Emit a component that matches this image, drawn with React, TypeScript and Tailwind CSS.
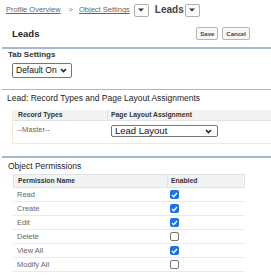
import React from "react";

function DropBtn() {
  return (
    <span className="inline-flex h-[13px] w-[15px] items-center justify-center rounded-[2px] border border-[#b0b0b0] bg-[#fbfbfb]">
      <svg width="6" height="4" viewBox="0 0 6 4">
        <path d="M0 0.5h6L3 3.5z" fill="#333" />
      </svg>
    </span>
  );
}

function Chevron() {
  return (
    <svg width="7" height="5" viewBox="0 0 7 5" className="shrink-0">
      <path d="M1 1l2.5 2.5L6 1" fill="none" stroke="#222" strokeWidth="1.6" />
    </svg>
  );
}

function Check({ on }: { on: boolean }) {
  return on ? (
    <span className="flex h-[9px] w-[9px] items-center justify-center rounded-[2px] bg-[#1a73e8]">
      <svg width="7" height="6" viewBox="0 0 7 6">
        <path d="M1 3l1.7 1.7L6 1" fill="none" stroke="#fff" strokeWidth="1.4" />
      </svg>
    </span>
  ) : (
    <span className="h-[9px] w-[9px] rounded-[2px] border border-[#767676] bg-white" />
  );
}

const perms: [string, boolean][] = [
  ["Read", true],
  ["Create", true],
  ["Edit", true],
  ["Delete", false],
  ["View All", true],
  ["Modify All", false],
];

export default function App() {
  return (
    <div
      className="h-[276px] w-[271px] overflow-hidden bg-white text-[#333]"
      style={{ fontFamily: '"Liberation Sans", Arial, sans-serif' }}
    >
      {/* breadcrumb */}
      <div className="flex h-[20px] items-center whitespace-nowrap pl-[6px] text-[7.5px] leading-none text-[#666]">
        <span className="underline">Profile Overview</span>
        <span className="ml-[8px] mr-[6px] text-[#777]">&gt;</span>
        <span className="underline">Object Settings</span>
        <span className="ml-[4px] flex">
          <DropBtn />
        </span>
        <span className="ml-[6px] text-[10px] font-bold text-[#444]">Leads</span>
        <span className="ml-[1px] flex">
          <DropBtn />
        </span>
      </div>

      {/* header */}
      <div className="flex h-[27px] items-center pl-[12px] pr-[21px]">
        <span className="text-[9.5px] font-bold leading-none text-[#222]">Leads</span>
        <div className="ml-auto flex gap-[4px]">
          <span className="flex h-[13px] items-center rounded-[2px] border border-[#b5b5b5] bg-[#f7f7f7] px-[3px] text-[6px] font-bold leading-none text-[#444]">
            Save
          </span>
          <span className="flex h-[13px] items-center rounded-[2px] border border-[#b5b5b5] bg-[#f7f7f7] px-[3px] text-[6px] font-bold leading-none text-[#444]">
            Cancel
          </span>
        </div>
      </div>
      <div className="ml-[2px] h-[1.5px] bg-[#a8b5d3]" />

      {/* tab settings */}
      <div className="pl-[8px] pt-[1px] text-[8px] font-bold leading-[10px] text-[#333]">Tab Settings</div>
      <div className="pl-[12px] pt-[3px]">
        <span className="flex h-[15px] w-[60px] items-center justify-between whitespace-nowrap rounded-[2px] border border-[#767676] bg-white pl-[3px] pr-[4px] text-[8.5px] leading-none text-[#111]">
          Default On
          <Chevron />
        </span>
      </div>
      <div className="mt-[11px] ml-[2px] h-[1.5px] bg-[#a8b5d3]" />

      {/* record types */}
      <div className="whitespace-nowrap pl-[7px] pt-[2px] text-[8.5px] leading-[12px] text-[#222]">
        Lead: Record Types and Page Layout Assignments
      </div>
      <div className="ml-[12px] mt-[6px] border-b border-l border-[#eeecd1]">
        <div className="flex h-[11px] items-center border-b border-[#e0e3e5] bg-[#f2f3f3] text-[6.8px] font-bold leading-none text-[#333]">
          <span className="w-[94px] pl-[5px]">Record Types</span>
          <span className="h-full border-l border-[#e0e3e5]" />
          <span className="pl-[3px]">Page Layout Assignment</span>
        </div>
        <div className="flex h-[22px] items-start text-[7.5px] leading-none text-[#666]">
          <span className="w-[95px] pl-[4px] pt-[5px]">--Master--</span>
          <span className="mt-[4px] ml-[3px] flex h-[12px] w-[107px] items-center justify-between whitespace-nowrap rounded-[2px] border border-[#767676] bg-white px-[3px] pr-[5px] text-[9.5px] leading-none text-[#111]">
            Lead Layout
            <Chevron />
          </span>
        </div>
      </div>
      <div className="mt-[12px] ml-[2px] h-[2px] bg-[#a8b5d3]" />

      {/* object permissions */}
      <div className="pl-[8px] pt-[2px] text-[8.5px] leading-[12px] text-[#222]">Object Permissions</div>
      <div className="ml-[13px] mt-[2px] w-[232px]">
        <div className="flex h-[14px] items-center border border-[#e0e3e5] bg-[#f2f3f3] text-[6.8px] font-bold leading-none text-[#333]">
          <span className="w-[153px] pl-[4px]">Permission Name</span>
          <span className="h-full border-l border-[#e0e3e5]" />
          <span className="pl-[3px]">Enabled</span>
        </div>
        {perms.map(([name, on]) => (
          <div key={name} className="flex h-[14px] items-center border-b border-[#eeecd1] text-[7.5px] leading-none text-[#666]">
            <span className="w-[157px] pl-[4px]">{name}</span>
            <Check on={on} />
          </div>
        ))}
      </div>
    </div>
  );
}
